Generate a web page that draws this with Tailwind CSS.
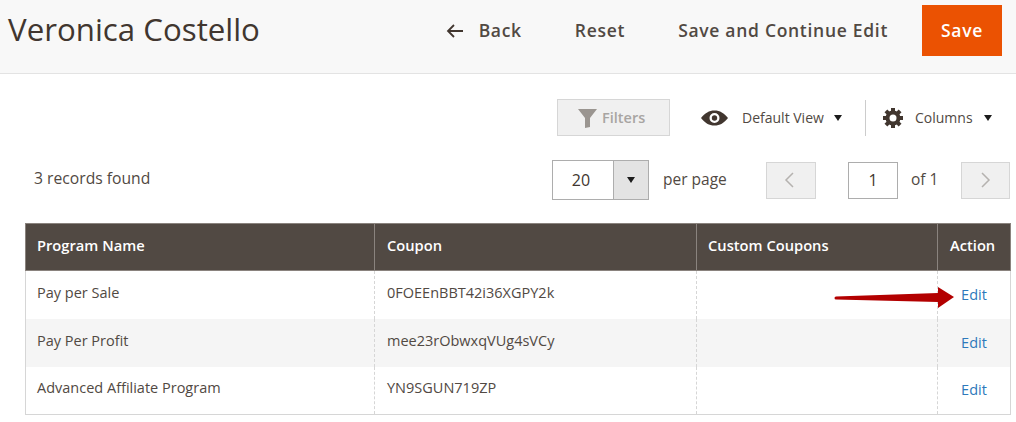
<!DOCTYPE html>
<html lang="en">
<head>
<meta charset="UTF-8">
<title>Veronica Costello</title>
<script src="https://cdn.jsdelivr.net/npm/@tailwindcss/browser@4"></script>
</head>
<body class="bg-white font-['Open_Sans',sans-serif] text-[#41362f] w-[1016px] h-[422px] overflow-hidden">

<!-- Page header -->
<header class="h-[74px] bg-[#f8f8f8] border-b border-[#e3e3e3] flex items-start">
  <h1 class="ml-2 mt-[7px] text-[31.25px] leading-[44px] font-normal">Veronica Costello</h1>
  <div class="ml-auto flex items-center h-[51px] mt-[5px] mr-[14px] text-[17.5px] font-semibold tracking-[0.7px] text-[#514943]">
    <svg class="w-[18px] h-[14px] mr-[15px]" viewBox="0 0 18 14" fill="none" stroke="#41362f" stroke-width="1.8"><path d="M17 7H2M8 1L2 7l6 6"/></svg>
    <span>Back</span>
    <span class="ml-[53px]">Reset</span>
    <span class="ml-[53px]">Save and Continue Edit</span>
    <span class="ml-[34px] w-[80px] h-[51px] bg-[#eb5202] text-white flex items-center justify-center">Save</span>
  </div>
</header>

<!-- Toolbar -->
<div class="flex items-center h-[37px] mt-[25px] text-[14px] text-[#514943]">
  <div class="ml-[557px] w-[113px] h-[37px] bg-[#f0f0f0] border border-[#d6d6d6] flex items-center gap-[5px] pl-[20px] text-[14.5px] text-[#a8a5a2] font-semibold">
    <svg class="w-[19px] h-[20px]" viewBox="0 0 19 20" fill="#9a9590"><path d="M0 1h19L12 10v9l-5 1V10z"/></svg>
    <span>Filters</span>
  </div>
  <svg class="ml-[31px] w-[27px] h-[16px]" viewBox="0 0 27 16"><path fill="#41362f" fill-rule="evenodd" d="M0 8C4 3 8 .5 13.500 .5S23 3 27 8c-4 5-8 7.500-13.500 7.500S4 13 0 8zm13.500-5a5 5 0 1 0 0 10 5 5 0 0 0 0-10z"/><circle cx="13.500" cy="8" r="2.700" fill="#41362f"/></svg>
  <span class="ml-[14px] w-[82px] whitespace-nowrap text-[14px]">Default View</span>
  <span class="ml-[10px] w-0 h-0 border-x-[4.5px] border-x-transparent border-t-[6px] border-t-[#1c1c1c]"></span>
  <span class="ml-[23px] w-px h-[36px] bg-[#cccccc]"></span>
  <svg class="ml-[17px] w-[20px] h-[20px]" viewBox="0 0 20 20">
    <g fill="#41362f">
      <rect x="8" y="0" width="4" height="20"/>
      <rect x="8" y="0" width="4" height="20" transform="rotate(45 10 10)"/>
      <rect x="8" y="0" width="4" height="20" transform="rotate(90 10 10)"/>
      <rect x="8" y="0" width="4" height="20" transform="rotate(135 10 10)"/>
    </g>
    <circle cx="10" cy="10" r="5.500" fill="none" stroke="#41362f" stroke-width="4"/>
    <circle cx="10" cy="10" r="3.500" fill="#fff"/>
  </svg>
  <span class="ml-[12px] w-[58px]">Columns</span>
  <span class="ml-[11px] w-0 h-0 border-x-[4.5px] border-x-transparent border-t-[6px] border-t-[#1c1c1c]"></span>
</div>

<!-- Records and pager -->
<div class="flex items-center h-[40px] mt-[24px] text-[15.5px] text-[#514943]">
  <span class="ml-[34px] pb-[3px] text-[15.7px]">3 records found</span>
  <div class="ml-auto flex items-center">
    <div class="w-[97px] h-[40px] border border-[#adadad] flex">
      <span class="w-[56px] flex items-center justify-center text-[#41362f] text-[16px]">20</span>
      <span class="flex-1 bg-[#e3e3e3] border-l border-[#adadad] flex items-center justify-center ml-[4px]">
        <span class="w-0 h-0 border-x-[4.5px] border-x-transparent border-t-[6px] border-t-[#1c1c1c]"></span>
      </span>
    </div>
    <span class="ml-[14px] w-[65px] whitespace-nowrap">per page</span>
    <div class="ml-[38px] w-[50px] h-[37px] bg-[#f0f0f0] border border-[#d6d6d6] flex items-center justify-center">
      <svg class="w-[10px] h-[16px] -ml-[5px]" viewBox="0 0 10 16" fill="none" stroke="#b5b2af" stroke-width="1.500"><path d="M9 1L2 8l7 7"/></svg>
    </div>
    <div class="ml-[32px] w-[50px] h-[37px] border border-[#adadad] flex items-center justify-center text-[#41362f] text-[16px]">1</div>
    <span class="ml-[13px] w-[27px] whitespace-nowrap">of 1</span>
    <div class="ml-[23px] mr-[6px] w-[49px] h-[37px] bg-[#f0f0f0] border border-[#d6d6d6] flex items-center justify-center">
      <svg class="w-[10px] h-[16px]" viewBox="0 0 10 16" fill="none" stroke="#b5b2af" stroke-width="1.500"><path d="M1 1l7 7-7 7"/></svg>
    </div>
  </div>
</div>

<!-- Grid -->
<div class="relative ml-[25px] mt-[23px] w-[985px]">
  <table class="w-[985px] table-fixed border-collapse text-[14.5px] text-[#514943]">
    <colgroup><col class="w-[349px]"><col class="w-[322px]"><col class="w-[241px]"><col class="w-[73px]"></colgroup>
    <thead>
      <tr class="h-[47px] bg-[#514943] text-white text-left text-[14.7px]">
        <th class="border border-[#8a837e] pl-[11px] pb-[4px] font-semibold">Program Name</th>
        <th class="border border-[#8a837e] pl-3 pb-[4px] font-semibold">Coupon</th>
        <th class="border border-[#8a837e] pl-[11px] pb-[4px] font-semibold">Custom Coupons</th>
        <th class="border border-[#8a837e] pl-3 pb-[4px] font-semibold whitespace-nowrap">Action</th>
      </tr>
    </thead>
    <tbody>
      <tr class="h-[48px] bg-white">
        <td class="border-l border-[#d6d6d6] pl-[11px] pb-[4px]">Pay per Sale</td>
        <td class="border-l border-dashed border-[#d6d6d6] pl-3 pb-[4px]">0FOEEnBBT42i36XGPY2k</td>
        <td class="border-l border-dashed border-[#d6d6d6]"></td>
        <td class="border-x border-[#d6d6d6] [border-left-style:dashed] text-center text-[#2d79bb] pt-[1px]">Edit</td>
      </tr>
      <tr class="h-[48px] bg-[#f5f5f5]">
        <td class="border-l border-[#d6d6d6] pl-[11px] pb-[4px]">Pay Per Profit</td>
        <td class="border-l border-dashed border-[#d6d6d6] pl-3 pb-[4px]">mee23rObwxqVUg4sVCy</td>
        <td class="border-l border-dashed border-[#d6d6d6]"></td>
        <td class="border-x border-[#d6d6d6] [border-left-style:dashed] text-center text-[#2d79bb]">Edit</td>
      </tr>
      <tr class="h-[48px] bg-white border-b border-[#d6d6d6]">
        <td class="border-l border-[#d6d6d6] pl-[11px] pb-[5px]">Advanced Affiliate Program</td>
        <td class="border-l border-dashed border-[#d6d6d6] pl-3 pb-[5px]">YN9SGUN719ZP</td>
        <td class="border-l border-dashed border-[#d6d6d6]"></td>
        <td class="border-x border-[#d6d6d6] [border-left-style:dashed] text-center text-[#2d79bb]">Edit</td>
      </tr>
    </tbody>
  </table>
  <!-- Annotation arrow over the first row -->
  <svg class="absolute left-[809px] top-[63px] w-[122px] h-[24px]" viewBox="0 0 122 24"><path fill="#b30000" d="M2 10.500L104 7V1l16 10L104 22v-6L2 13.500a1.500 1.500 0 0 1 0-3z"/></svg>
</div>

</body>
</html>
